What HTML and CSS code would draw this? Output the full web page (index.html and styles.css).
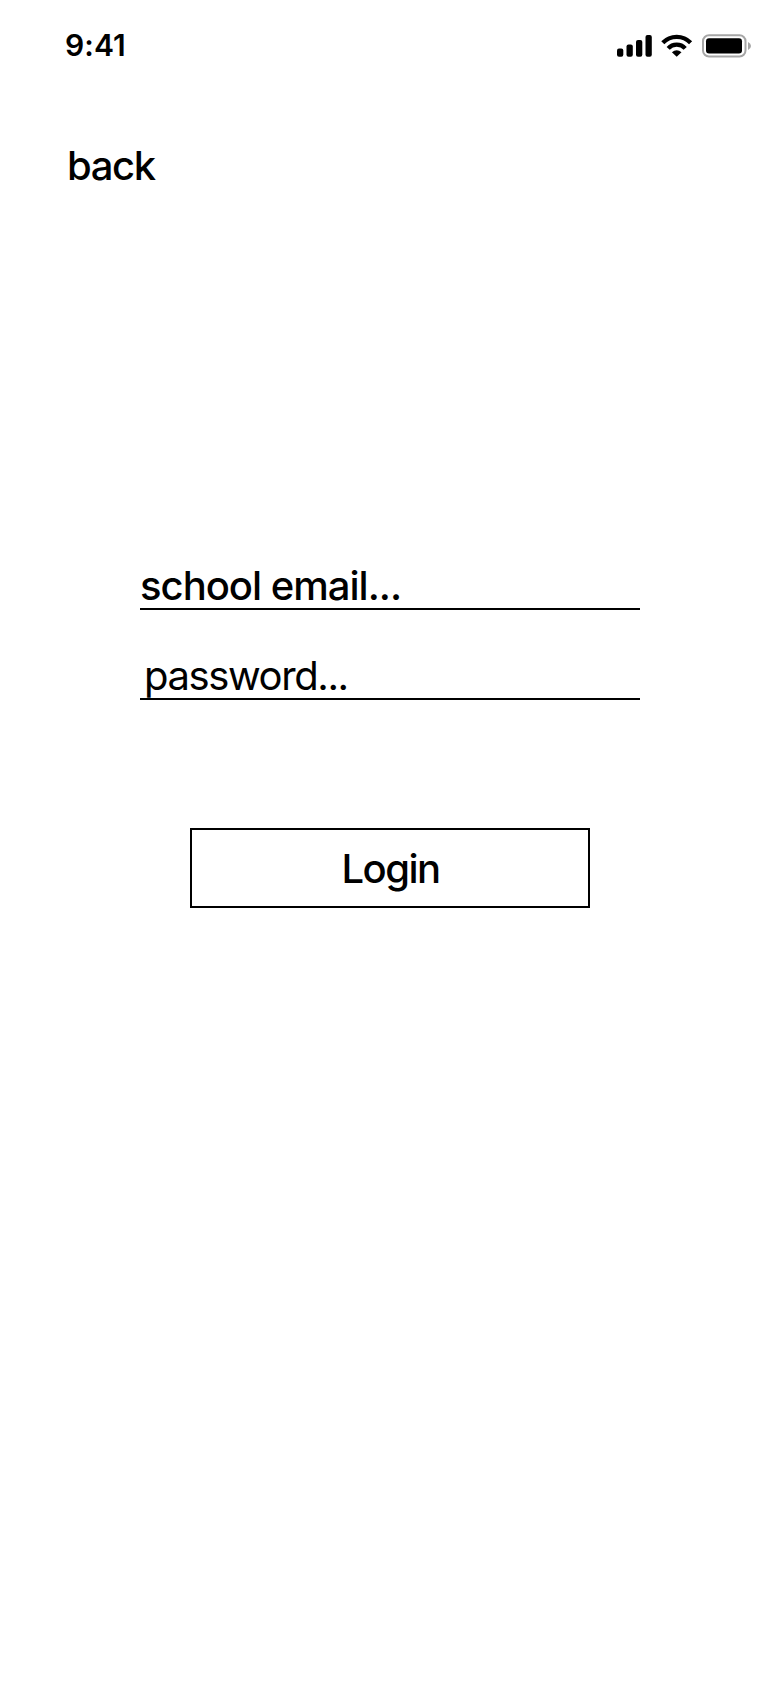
FILE: index.html
```html
<!DOCTYPE html>
<html lang="en">
<head>
<meta charset="utf-8">
<title>Login</title>
<link rel="stylesheet" href="styles.css">
</head>
<body>
<header class="status">
  <span class="time">9:41</span>
  <svg class="icons" width="136" height="26" viewBox="0 0 136 26">
    <rect x="1" y="15.500" width="6.300" height="8.200" rx="2"/>
    <rect x="10.500" y="11.500" width="6.300" height="12.200" rx="2"/>
    <rect x="20" y="7" width="6.300" height="16.700" rx="2"/>
    <rect x="29.500" y="2" width="6.300" height="21.700" rx="2"/>
    <g fill="none" stroke="#000" stroke-width="4.300">
      <path d="M46.800 9.700A19.300 19.300 0 0 1 74.600 9.700"/>
      <path d="M52.200 15.400A11.600 11.600 0 0 1 69.200 15.400"/>
    </g>
    <path d="M55.900 19.200Q60.700 15.500 65.500 19.200L60.700 23.800Z"/>
    <rect x="87" y="2.300" width="42.500" height="21.200" rx="6" fill="none" stroke="#a6a6a6" stroke-width="2"/>
    <rect x="90" y="5.200" width="36" height="15.400" rx="3"/>
    <path d="M132 9Q135 10.300 135 13Q135 15.700 132 17Z" fill="#a6a6a6"/>
  </svg>
</header>
<main class="screen">
  <a class="back">back</a>
  <form class="form">
    <div class="field email">school email...</div>
    <div class="field password">password...</div>
    <div class="login">Login</div>
  </form>
</main>
</body>
</html>
```
FILE: styles.css
```css
* { box-sizing: border-box; }
body { margin: 0; background: #fff; color: #000; font-family: Inter, "Liberation Sans", sans-serif; }
.status { display: flex; justify-content: space-between; height: 90px; padding: 31px 28px 0 65px; }
.icons { margin-top: 2px; }
.time { font-size: 30px; line-height: 28px; font-weight: 600; letter-spacing: 0.1px; }
.screen { display: flex; flex-direction: column; height: 1598px; }
.back { margin: 52px 0 0 67px; height: 48px; font-size: 40px; line-height: 48px; font-weight: 500; letter-spacing: -1.4px; }
.form { display: flex; flex-direction: column; width: 500px; margin: 372px 0 0 140px; }
.field { height: 48px; border-bottom: 2px solid #000; font-size: 40px; line-height: 48px; white-space: nowrap; }
.email { font-weight: 500; letter-spacing: -1px; }
.password { margin-top: 42px; padding-left: 4px; letter-spacing: -1.4px; }
.login { width: 400px; height: 80px; margin: 128px auto 0; padding-left: 1px; border: 2px solid #000; text-align: center; font-size: 40px; line-height: 77px; font-weight: 500; letter-spacing: -1.5px; }
```
